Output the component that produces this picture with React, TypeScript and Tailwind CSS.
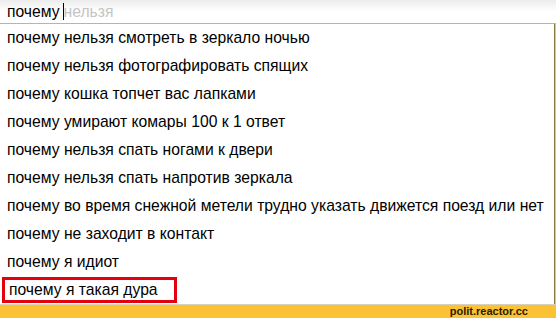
import React from 'react';

const suggestions = [
  'почему нельзя смотреть в зеркало ночью',
  'почему нельзя фотографировать спящих',
  'почему кошка топчет вас лапками',
  'почему умирают комары 100 к 1 ответ',
  'почему нельзя спать ногами к двери',
  'почему нельзя спать напротив зеркала',
  'почему во время снежной метели трудно указать движется поезд или нет',
  'почему не заходит в контакт',
  'почему я идиот',
];

const App: React.FC = () => {
  return (
    <div
      className="w-[556px] h-[318px] overflow-hidden flex flex-col bg-white text-black"
      style={{ fontFamily: '"Liberation Sans", Arial, sans-serif' }}
    >
      {/* поле ввода */}
      <div className="h-6 shrink-0 flex items-center pl-[7px] text-[15.7px] bg-gradient-to-b from-[#ececec] via-white to-white border-b border-[#b4b4b4]">
        <span>почему</span>
        <span className="ml-[3px] w-px h-[17px] bg-black" />
        <span className="text-[#c4c4c4]">нельзя</span>
      </div>

      {/* подсказки */}
      <div className="flex-1 flex">
        <div className="flex-1 flex flex-col border-r border-[#8a7a3a]">
          {suggestions.map((s) => (
            <div key={s} className="h-7 flex items-center pl-[7px] text-[15.7px] leading-none whitespace-nowrap">
              {s}
            </div>
          ))}
          <div className="h-7 flex items-center pl-[2px]">
            <div className="h-[26px] w-[175px] flex items-center pl-[4px] border-[3px] border-[#e3000f] text-[15.7px] leading-none whitespace-nowrap">
              почему я такая дура
            </div>
          </div>
        </div>
        <div className="w-px bg-[#f5c842]" />
      </div>

      {/* подпись */}
      <div className="h-[14px] shrink-0 bg-[#fbc233] border-t border-[#d8d0b8] flex items-center justify-end pr-[28px]">
        <span className="text-[11px] font-bold text-[#2a1c00] leading-none">polit.reactor.cc</span>
      </div>
    </div>
  );
};

export default App;
